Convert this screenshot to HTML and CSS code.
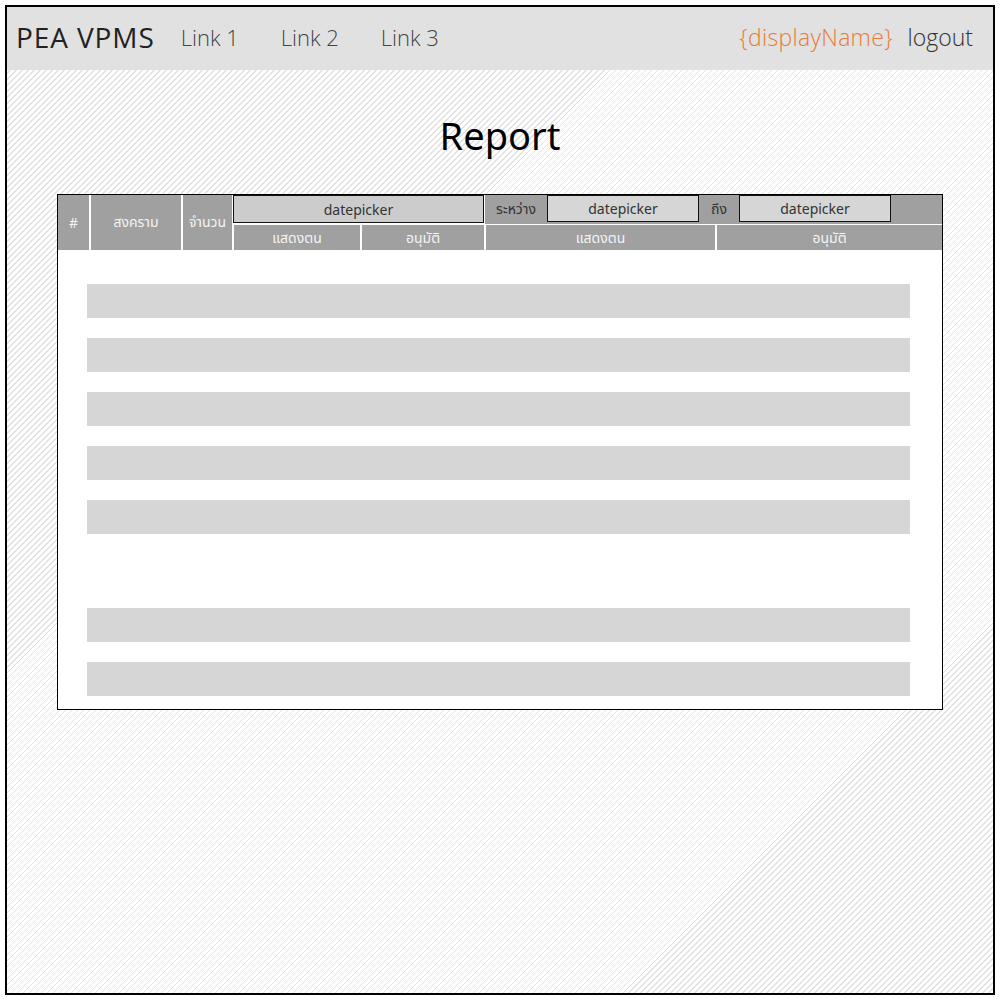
FILE: index.html
```html
<!DOCTYPE html>
<html>
<head>
<meta charset="utf-8">
<link rel="stylesheet" href="styles.css">
</head>
<body>
<div class="frame">
  <header class="topbar">
    <div class="brand">PEA VPMS</div>
    <nav class="links">
      <a class="link">Link 1</a>
      <a class="link">Link 2</a>
      <a class="link">Link 3</a>
    </nav>
    <div class="user">
      <span class="display-name">{displayName}</span>
      <span class="logout">logout</span>
    </div>
  </header>
  <main class="content">
    <h1 class="title">Report</h1>
    <section class="report">
      <div class="thead">
        <div class="th th-span">#</div>
        <div class="th th-span">สงคราม</div>
        <div class="th th-span">จำนวน</div>
        <div class="th-picker">datepicker</div>
        <div class="th-range">
          <span class="range-label">ระหว่าง</span>
          <span class="range-picker">datepicker</span>
          <span class="range-label range-to">ถึง</span>
          <span class="range-picker">datepicker</span>
          <span class="range-fill"></span>
        </div>
        <div class="th th-sub">แสดงตน</div>
        <div class="th th-sub">อนุมัติ</div>
        <div class="th th-sub">แสดงตน</div>
        <div class="th th-sub">อนุมัติ</div>
      </div>
      <div class="rows">
        <div class="row"></div>
        <div class="row"></div>
        <div class="row"></div>
        <div class="row"></div>
        <div class="row"></div>
        <div class="row row-empty"></div>
        <div class="row"></div>
        <div class="row"></div>
      </div>
    </section>
  </main>
</div>
</body>
</html>
```

FILE: styles.css
```css
* { box-sizing: border-box; }
html, body { margin: 0; padding: 0; }
body {
  background: #fff;
  font-family: "Noto Sans", "Noto Sans Thai", "DejaVu Sans", sans-serif;
}
.frame {
  margin: 5px;
  height: 990px;
  border: 2px solid #000;
  display: flex;
  flex-direction: column;
  background: repeating-linear-gradient(135deg, #e2e2e2 0 1px, #ffffff 1px 4.24px);
}
.topbar {
  height: 63px;
  background: #e1e1e1;
  display: flex;
  align-items: center;
  padding: 0 20px 3px 9px;
  font-family: "Open Sans", "Noto Sans", sans-serif;
}
.brand {
  font-size: 28px;
  color: #222;
  letter-spacing: 0.9px;
  margin-right: 26px;
}
.links { display: flex; }
.link {
  font-size: 22px;
  font-weight: 300;
  color: #444;
  width: 100px;
}
.user { margin-left: auto; display: flex; gap: 15px; font-size: 23px; font-weight: 300; }
.display-name { color: #e77b33; letter-spacing: 0.3px; }
.logout { color: #333; }
.content { flex: 1; padding: 0 50px; }
.title {
  margin: 43px 0 37px;
  text-align: center;
  font-size: 38px;
  font-weight: 400;
  line-height: 44px;
  color: #000;
}
.report {
  border: 1px solid #000;
  background: #fff;
}
.thead {
  display: grid;
  grid-template-columns: 31px 90px 49px 126px 122px 229px 1fr;
  grid-template-rows: 29px 25px;
  column-gap: 2px;
  row-gap: 1px;
  background: #fff;
  font-size: 14px;
}
.th {
  background: #a0a0a0;
  color: #f4f4f4;
  display: flex;
  align-items: center;
  justify-content: center;
}
.th-span { grid-row: 1 / span 2; }
.th-picker {
  grid-column: 4 / span 2;
  background: #cccccc;
  border: 1px solid #111;
  color: #333;
  display: flex;
  align-items: center;
  justify-content: center;
  margin: 0 0 1px -1px;
}
.th-range {
  grid-column: 6 / span 2;
  display: flex;
  background: #a0a0a0;
  margin-left: -1px;
}
.range-label {
  width: 62px;
  display: flex;
  align-items: center;
  justify-content: center;
  color: #333;
}
.range-to { width: 40px; }
.range-picker {
  width: 152px;
  margin-bottom: 2px;
  background: #d6d6d6;
  border: 1px solid #111;
  color: #333;
  display: flex;
  align-items: center;
  justify-content: center;
}
.range-fill { flex: 1; }
.th-sub { padding-top: 1px; }
.rows {
  display: flex;
  flex-direction: column;
  gap: 20px;
  padding: 34px 32px 13px 29px;
}
.row { height: 34px; background: #d6d6d6; }
.row-empty { background: transparent; }
```
